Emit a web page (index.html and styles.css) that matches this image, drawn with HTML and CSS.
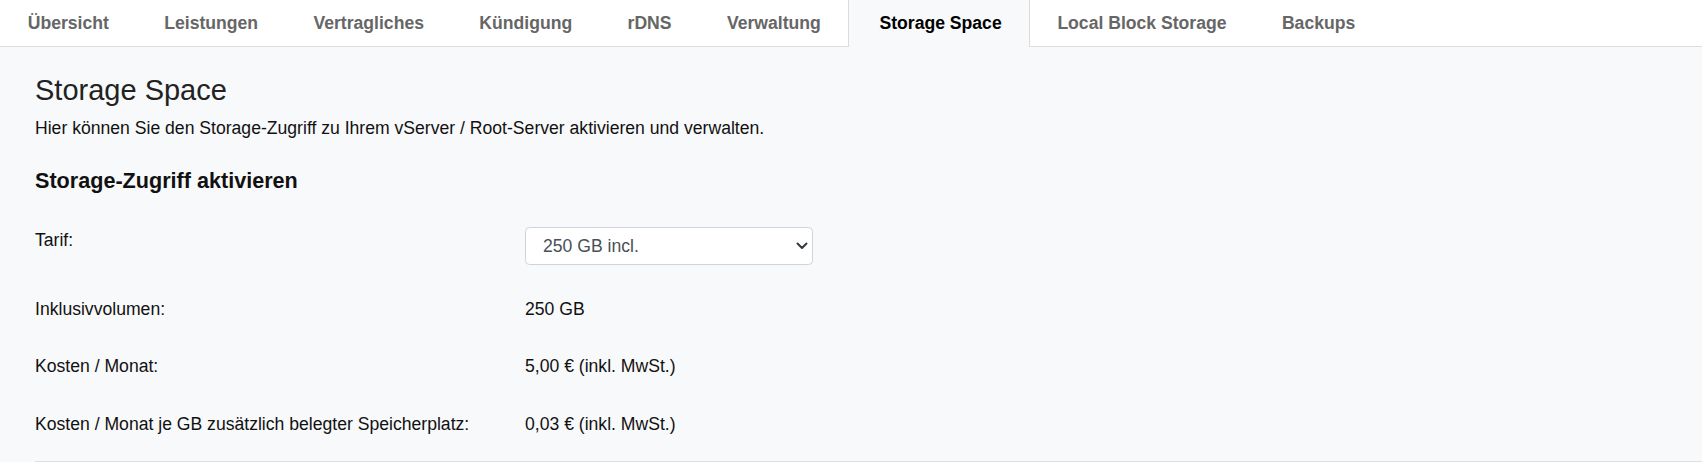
FILE: index.html
```html
<!DOCTYPE html>
<html lang="de">
<head>
  <meta charset="UTF-8">
  <title>Storage Space</title>
  <link rel="stylesheet" href="styles.css">
</head>
<body>
  <nav class="tabs">
    <a class="tab" href="#">Übersicht</a>
    <a class="tab" href="#">Leistungen</a>
    <a class="tab" href="#">Vertragliches</a>
    <a class="tab" href="#">Kündigung</a>
    <a class="tab" href="#">rDNS</a>
    <a class="tab" href="#">Verwaltung</a>
    <a class="tab active" href="#">Storage Space</a>
    <a class="tab" href="#">Local Block Storage</a>
    <a class="tab" href="#">Backups</a>
  </nav>

  <main class="content">
    <h1>Storage Space</h1>
    <p class="intro">Hier können Sie den Storage-Zugriff zu Ihrem vServer / Root-Server aktivieren und verwalten.</p>

    <h2>Storage-Zugriff aktivieren</h2>

    <form class="details">
      <div class="row">
        <label for="tarif">Tarif:</label>
        <div class="select-wrap">
          <select id="tarif">
            <option>250 GB incl.</option>
            <option>500 GB incl.</option>
            <option>1000 GB incl.</option>
          </select>
          <svg class="chevron" width="12" height="8" viewBox="0 0 12 8">
            <path d="M1.5 1.5 L6 6 L10.5 1.5" fill="none" stroke="#343a40" stroke-width="2" stroke-linecap="round" stroke-linejoin="round"/>
          </svg>
        </div>
      </div>
      <div class="row">
        <span class="label">Inklusivvolumen:</span>
        <span class="value">250 GB</span>
      </div>
      <div class="row">
        <span class="label">Kosten / Monat:</span>
        <span class="value">5,00 € (inkl. MwSt.)</span>
      </div>
      <div class="row">
        <span class="label">Kosten / Monat je GB zusätzlich belegter Speicherplatz:</span>
        <span class="value">0,03 € (inkl. MwSt.)</span>
      </div>
    </form>

    <hr class="divider">
  </main>
</body>
</html>
```

FILE: styles.css
```css
* {
  box-sizing: border-box;
}

body {
  margin: 0;
  font-family: "Liberation Sans", Arial, sans-serif;
  font-size: 17.6px;
  color: #111;
  background: #f8f9fb;
  min-height: 100vh;
}

.tabs {
  display: flex;
  background: white;
  border-bottom: 1px solid #dcdcdc;
  height: 47px;
}

.tab {
  display: block;
  padding: 0 27.7px;
  line-height: 46px;
  font-weight: bold;
  color: #666;
  text-decoration: none;
  white-space: nowrap;
}

.tab.active {
  color: #000;
  background: #f8f9fb;
  border-left: 1px solid #dcdcdc;
  border-right: 1px solid #dcdcdc;
  height: 47px;
  padding: 0 27px 0 30px;
}

.content {
  padding: 26px 0 0 35px;
}

h1 {
  margin: 0 0 7.6px;
  font-size: 29px;
  font-weight: normal;
  line-height: 1.2;
  color: #222;
}

.intro {
  margin: 0;
  line-height: 26.4px;
}

h2 {
  margin: 26px 0 33px;
  font-size: 21.6px;
  line-height: 1.2;
  color: #111;
}

.row {
  display: grid;
  grid-template-columns: 490px 1fr;
  align-items: start;
  line-height: 26.4px;
  margin-bottom: 31px;
}

.row:last-child {
  margin-bottom: 0;
}

.row label {
  line-height: 26.4px;
}

.select-wrap {
  position: relative;
  width: 288px;
}

select {
  appearance: none;
  -webkit-appearance: none;
  width: 288px;
  height: 38px;
  padding: 0 30px 0 17px;
  font-family: inherit;
  font-size: 17.6px;
  color: #495057;
  background: white;
  border: 1px solid #ced4da;
  border-radius: 4.5px;
}

.chevron {
  position: absolute;
  right: 5px;
  top: 15px;
}

.divider {
  margin: 24px 0 0;
  border: none;
  border-top: 1px solid #dedede;
}
```
